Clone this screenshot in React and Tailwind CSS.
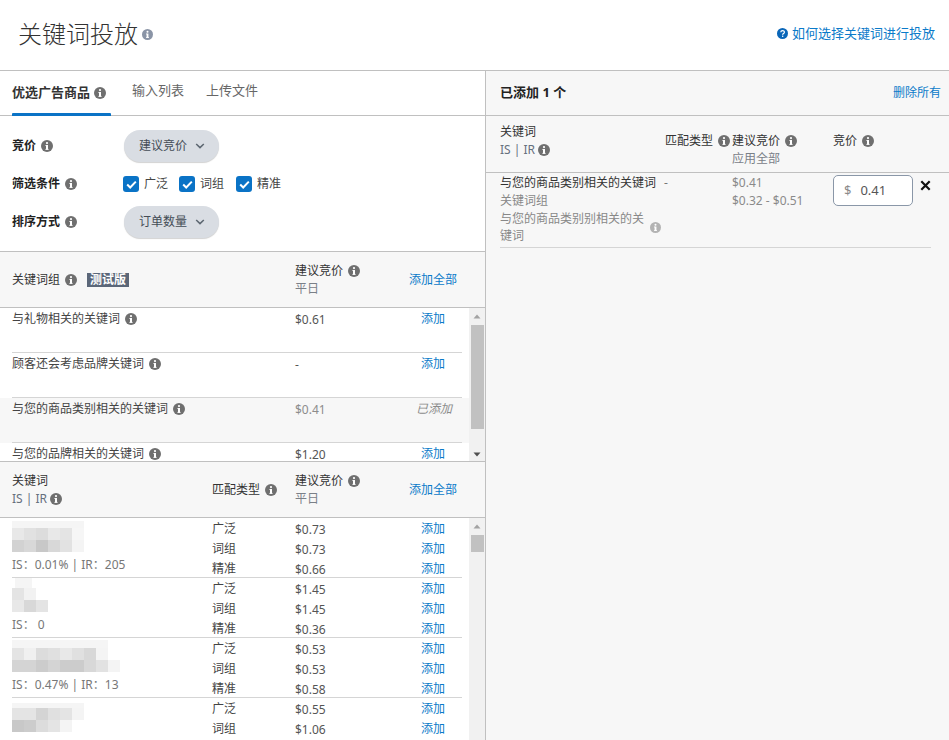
const FONT = '"Noto Sans","Noto Sans CJK SC",sans-serif';

function Info({ size = 12, color = "#6f6f6f", className = "" }) {
  return (
    <svg width={size} height={size} viewBox="0 0 12 12" className={`inline-block shrink-0 ${className}`}>
      <circle cx="6" cy="6" r="6" fill={color} />
      <circle cx="6" cy="3.1" r="1.1" fill="#fff" />
      <rect x="5" y="5" width="2" height="4.6" fill="#fff" />
      <rect x="4.4" y="5" width="1.4" height="0.9" fill="#fff" />
      <rect x="4.4" y="8.9" width="3.2" height="0.9" fill="#fff" />
    </svg>
  );
}

function Chevron() {
  return (
    <svg width="10" height="6" viewBox="0 0 10 6" className="shrink-0">
      <path d="M1.2 1l3.8 3.6L8.8 1" fill="none" stroke="#5c6670" strokeWidth="1.5" />
    </svg>
  );
}

function Pill({ children }) {
  return (
    <div className="flex h-[32px] w-[95px] items-center gap-[8px] rounded-full bg-[#d9dde3] pl-[15px] text-[12px] text-[#444c56] shadow-[0_1px_1px_rgba(0,0,0,0.18)]">
      {children}
      <Chevron />
    </div>
  );
}

function Check({ label }) {
  return (
    <div className="flex items-center gap-[5px] text-[12px] text-[#444]">
      <span className="flex h-[16px] w-[16px] items-center justify-center rounded-[3px] bg-[#0a73c6]">
        <svg width="11" height="9" viewBox="0 0 11 9">
          <path d="M1.2 4.5l3 3L9.8 1.6" fill="none" stroke="#fff" strokeWidth="2" />
        </svg>
      </span>
      {label}
    </div>
  );
}

function ScrollBar({ thumbTop, thumbHeight, down = true }) {
  return (
    <div className="absolute right-0 top-0 bottom-0 w-[16px] bg-[#f1f1f1]">
      <svg width="16" height="8" viewBox="0 0 16 8" className="absolute left-0 top-[5px]">
        <path d="M8 1.5l3.5 4h-7z" fill="#a3a3a3" />
      </svg>
      <div className="absolute left-[2px] w-[13px] bg-[#c1c1c1]" style={{ top: thumbTop, height: thumbHeight }} />
      {down && (
        <svg width="16" height="8" viewBox="0 0 16 8" className="absolute left-0 bottom-[3px]">
          <path d="M8 6.5l3.5-4h-7z" fill="#505050" />
        </svg>
      )}
    </div>
  );
}

function GroupRow({ name, price, added }) {
  return (
    <div className={`h-[45px] shrink-0 ${added ? "bg-[#f7f7f7]" : ""}`}>
      <div className="ml-[12px] flex h-full w-[450px] border-b border-[#d5d5d5] pt-[1px]">
        <div className="flex h-[20px] w-[283px] shrink-0 items-center gap-[5px] text-[12px] text-[#444]">
          {name}
          <Info />
        </div>
        <div className={`flex h-[22px] w-[100px] shrink-0 items-center text-[12px] ${added ? "text-[#8c8c8c]" : "text-[#555]"}`}>{price}</div>
        <div className={`h-[20px] shrink-0 whitespace-nowrap text-[12px] leading-[20px] ${added ? "pl-[21px] italic text-[#8c8c8c]" : "pl-[26px] text-[#0a7ac9]"}`}>
          {added ? "已添加" : "添加"}
        </div>
      </div>
    </div>
  );
}

function Mosaic({ strip, a, b }) {
  return (
    <svg width="120" height="36" viewBox="0 0 120 36" className="block">
      {strip && <rect x={strip[0]} y={strip[1]} width={strip[2]} height={10 - strip[1]} fill="#f5f5f5" />}
      {a.map((c, i) => (
        <rect key={i} x={i * 12} y="10" width="12" height="12" fill={c} />
      ))}
      {b.map((c, i) => (
        <rect key={i} x={i * 12} y="22" width="12" height="12" fill={c} />
      ))}
    </svg>
  );
}

function KeywordRow({ mosaic, stat, rows, last }) {
  return (
    <div className={`ml-[12px] flex h-[60px] w-[450px] shrink-0 ${last ? "" : "border-b border-[#d5d5d5]"}`}>
      <div className="w-[200px] shrink-0">
        <Mosaic {...mosaic} />
        <div className="mt-[2px] h-[16px] pt-[1px] text-[12px] leading-[16px] text-[#777]">{stat}</div>
      </div>
      <div className="w-[250px] min-w-0 pt-[1px]">
        {rows.map(([type, price]) => (
          <div key={type} className="flex h-[20px] items-center text-[12px]">
            <span className="w-[83px] text-[#444]">{type}</span>
            <span className="w-[100px] pt-[2px] text-[#555]">{price}</span>
            <span className="whitespace-nowrap pl-[26px] text-[#0a7ac9]">添加</span>
          </div>
        ))}
      </div>
    </div>
  );
}

const kw = [
  {
    mosaic: {
      strip: [0, 3, 72],
      a: ["#e8e8e8", "#e1e1e1", "#dcdcdc", "#e8e8e8", "#e4e4e4", "#f6f6f6"],
      b: ["#d2d2d2", "#d8d8d8", "#c8c8c8", "#d8d8d8", "#e2e2e2", "#f4f4f4"],
    },
    stat: "IS：0.01% | IR：205",
    rows: [["广泛", "$0.73"], ["词组", "$0.73"], ["精准", "$0.66"]],
  },
  {
    mosaic: {
      strip: [3, 0, 17],
      a: ["#e4e4e4", "#f2f2f2"],
      b: ["#e8e8e8", "#d8d8d8", "#e4e4e4"],
    },
    stat: "IS： 0",
    rows: [["广泛", "$1.45"], ["词组", "$1.45"], ["精准", "$0.36"]],
  },
  {
    mosaic: {
      strip: [0, 2, 96],
      a: ["#e4e4e4", "#f0f0f0", "#dcdcdc", "#e0e0e0", "#e8e8e8", "#e0e0e0", "#d8d8d8", "#f4f4f4"],
      b: ["#d4d4d4", "#d4d4d4", "#cccccc", "#d4d4d4", "#cccccc", "#cccccc", "#d8d8d8", "#e2e2e2", "#f4f4f4"],
    },
    stat: "IS：0.47% | IR：13",
    rows: [["广泛", "$0.53"], ["词组", "$0.53"], ["精准", "$0.58"]],
  },
  {
    mosaic: {
      strip: [0, 5, 72],
      a: ["#e4e4e4", "#e4e4e4", "#d4d4d4", "#e0e0e0", "#e4e4e4", "#f4f4f4"],
      b: ["#c8c8c8", "#cccccc", "#dcdcdc", "#e4e4e4", "#f4f4f4"],
    },
    stat: "",
    rows: [["广泛", "$0.55"], ["词组", "$1.06"]],
  },
];

export default function App() {
  return (
    <div className="h-[740px] w-[949px] overflow-hidden bg-white" style={{ fontFamily: FONT }}>
      <header className="flex h-[71px] items-start justify-between border-b border-[#c0c0c0]">
        <div className="flex items-center gap-[4px] pl-[18px] pt-[17px] text-[24px] font-light leading-[34px] text-[#333]">
          关键词投放
          <Info size={11} color="#8a94a6" className="mt-[1px]" />
        </div>
        <div className="flex items-center gap-[4px] pr-[14px] pt-[24px] text-[13px] leading-[18px] text-[#0a7ac9]">
          <svg width="11" height="11" viewBox="0 0 11 11">
            <circle cx="5.5" cy="5.5" r="5.5" fill="#0a66b8" />
            <path d="M3.8 4.2c0-2.2 3.6-2.2 3.6 0 0 1.4-1.8 1.2-1.8 2.6" fill="none" stroke="#fff" strokeWidth="1.2" />
            <rect x="5" y="7.6" width="1.3" height="1.3" fill="#fff" />
          </svg>
          如何选择关键词进行投放
        </div>
      </header>

      <div className="flex h-[669px]">
        <section className="flex w-[485px] shrink-0 flex-col">
          <nav className="flex h-[45px] shrink-0 border-b border-[#c0c0c0] pl-[12px] text-[13px]">
            <div className="relative flex h-[44px] w-[99px] items-center gap-[4px] whitespace-nowrap font-bold text-[#333]">
              优选广告商品
              <Info />
              <span className="absolute -bottom-[1px] left-0 right-0 h-[3px] rounded-t-[1px] bg-[#0a73c6]" />
            </div>
            <div className="ml-[21px] flex h-[40px] items-center text-[#666]">输入列表</div>
            <div className="ml-[22px] flex h-[40px] items-center text-[#666]">上传文件</div>
          </nav>

          <div className="flex h-[136px] shrink-0 flex-col border-b border-[#c0c0c0] pl-[12px] pt-[14px]">
            <div className="flex h-[32px] items-center">
              <div className="flex w-[112px] items-center gap-[5px] text-[12px] font-bold text-[#222]">竞价<Info /></div>
              <Pill>建议竞价</Pill>
            </div>
            <div className="mt-[6px] flex h-[32px] items-center">
              <div className="flex w-[111px] items-center gap-[5px] text-[12px] font-bold text-[#222]">筛选条件<Info /></div>
              <div className="flex">
                <Check label="广泛" />
                <div className="ml-[11px]"><Check label="词组" /></div>
                <div className="ml-[12px]"><Check label="精准" /></div>
              </div>
            </div>
            <div className="mt-[6px] flex h-[32px] items-center">
              <div className="flex w-[112px] items-center gap-[5px] text-[12px] font-bold text-[#222]">排序方式<Info /></div>
              <Pill>订单数量</Pill>
            </div>
          </div>

          <div className="flex h-[56px] shrink-0 items-center border-b border-[#c0c0c0] bg-[#f7f7f7] pl-[12px] text-[12px]">
            <div className="flex w-[283px] items-center gap-[5px] text-[#333]">
              关键词组
              <Info />
              <span className="ml-[5px] flex h-[14px] w-[42px] items-center justify-center bg-[#5b6779] font-bold text-white">测试版</span>
            </div>
            <div className="w-[114px]">
              <div className="flex h-[18px] items-center gap-[5px] text-[#333]">建议竞价<Info /></div>
              <div className="h-[18px] leading-[18px] text-[#7a8088]">平日</div>
            </div>
            <div className="text-[#0a7ac9]">添加全部</div>
          </div>

          <div className="relative h-[153px] shrink-0 overflow-hidden">
            <GroupRow name="与礼物相关的关键词" price="$0.61" />
            <GroupRow name="顾客还会考虑品牌关键词" price="-" />
            <GroupRow name="与您的商品类别相关的关键词" price="$0.41" added />
            <GroupRow name="与您的品牌相关的关键词" price="$1.20" />
            <ScrollBar thumbTop={17} thumbHeight={104} />
          </div>

          <div className="flex h-[57px] shrink-0 items-center border-y border-[#c0c0c0] bg-[#f7f7f7] pl-[12px] pt-[1px] text-[12px]">
            <div className="w-[200px]">
              <div className="h-[18px] leading-[18px] text-[#333]">关键词</div>
              <div className="flex h-[18px] items-center gap-[3px] text-[#66707e]">IS | IR<Info /></div>
            </div>
            <div className="flex w-[83px] items-center gap-[5px] text-[#333]">匹配类型<Info /></div>
            <div className="w-[114px]">
              <div className="flex h-[18px] items-center gap-[5px] text-[#333]">建议竞价<Info /></div>
              <div className="h-[18px] leading-[18px] text-[#7a8088]">平日</div>
            </div>
            <div className="text-[#0a7ac9]">添加全部</div>
          </div>

          <div className="relative min-h-0 flex-1 overflow-hidden">
            {kw.map((k, i) => (
              <KeywordRow key={i} {...k} last={i === kw.length - 1} />
            ))}
            <ScrollBar thumbTop={17} thumbHeight={17} down={false} />
          </div>
        </section>

        <aside className="min-w-0 flex-1 border-l border-[#c0c0c0] bg-[#f7f7f7]">
          <div className="flex h-[45px] items-center justify-between border-b border-[#c0c0c0] pl-[14px] pr-[8px]">
            <div className="text-[13px] font-bold text-[#222]">已添加 1 个</div>
            <div className="text-[12px] text-[#0a7ac9]">删除所有</div>
          </div>
          <div className="flex h-[57px] items-start border-b border-[#c0c0c0] pl-[14px] text-[12px]">
            <div className="w-[165px] pt-[7px]">
              <div className="h-[18px] leading-[18px] text-[#333]">关键词</div>
              <div className="flex h-[18px] items-center gap-[3px] text-[#66707e]">IS | IR<Info /></div>
            </div>
            <div className="flex w-[67px] items-center gap-[5px] pt-[16px] text-[#333]">匹配类型<Info /></div>
            <div className="w-[101px] pt-[16px]">
              <div className="flex h-[18px] items-center gap-[5px] text-[#333]">建议竞价<Info /></div>
              <div className="h-[18px] leading-[18px] text-[#7a8088]">应用全部</div>
            </div>
            <div className="flex items-center gap-[5px] pt-[16px] text-[#333]">竞价<Info /></div>
          </div>
          <div className="ml-[14px] mr-[18px] flex h-[75px] border-b border-[#d5d5d5] pt-[1px] text-[12px]">
            <div className="w-[164px] shrink-0">
              <div className="h-[18px] whitespace-nowrap leading-[18px] text-[#333]">与您的商品类别相关的关键词</div>
              <div className="h-[18px] leading-[18px] text-[#888]">关键词组</div>
              <div className="flex items-center gap-[5px] text-[#888]">
                <div className="w-[145px] leading-[17px]">与您的商品类别别相关的关键词</div>
                <Info size={11} color="#b3b3b3" />
              </div>
            </div>
            <div className="w-[68px] shrink-0 leading-[18px] text-[#777]">-</div>
            <div className="w-[101px] shrink-0 text-[#8a8a8a]">
              <div className="h-[18px] leading-[18px]">$0.41</div>
              <div className="h-[18px] whitespace-nowrap leading-[18px]">$0.32 - $0.51</div>
            </div>
            <div className="mt-[1px] flex h-[31px] w-[80px] shrink-0 items-center rounded-[5px] border border-[#8a97a8] bg-white pl-[10px] text-[13px] leading-none">
              <span className="text-[#8a8a8a]">$</span>
              <span className="ml-[9px] text-[#555]">0.41</span>
            </div>
            <svg width="11" height="11" viewBox="0 0 11 11" className="ml-[7px] mt-[6px] shrink-0">
              <path d="M1.3 1.3l8.4 8.4M9.7 1.3l-8.4 8.4" fill="none" stroke="#111" strokeWidth="2.2" />
            </svg>
          </div>
        </aside>
      </div>
    </div>
  );
}
